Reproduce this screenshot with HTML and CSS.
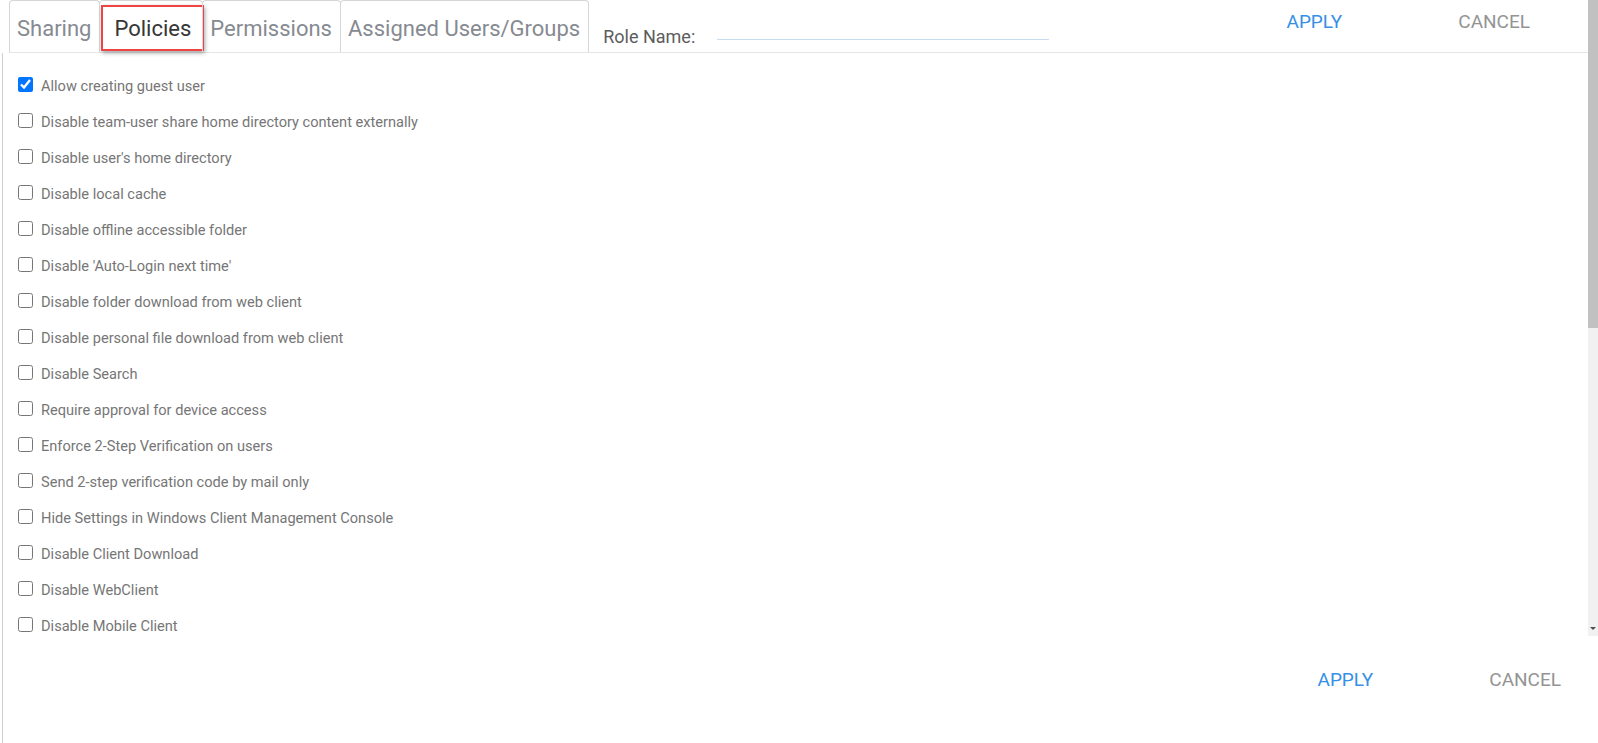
FILE: index.html
```html
<!DOCTYPE html>
<html lang="en">
<head>
    <meta charset="UTF-8">
    <title>Role Policies</title>
    <link rel="stylesheet" href="styles.css">
</head>
<body>
    <div class="viewport">
        <div class="scroll">
            <div class="header">
                <div class="tabs">
                    <div class="tab">Sharing</div>
                    <div class="tab active">Policies</div>
                    <div class="tab">Permissions</div>
                    <div class="tab">Assigned Users/Groups</div>
                </div>
                <div class="role">
                    <label class="role-label" for="roleName">Role Name:</label>
                    <input class="role-input" id="roleName" type="text">
                </div>
                <div class="actions top">
                    <button class="btn apply">APPLY</button>
                    <button class="btn cancel">CANCEL</button>
                </div>
            </div>
            <div class="list">
                <label class="row"><input type="checkbox" checked><span>Allow creating guest user</span></label>
                <label class="row"><input type="checkbox"><span>Disable team-user share home directory content externally</span></label>
                <label class="row"><input type="checkbox"><span>Disable user's home directory</span></label>
                <label class="row"><input type="checkbox"><span>Disable local cache</span></label>
                <label class="row"><input type="checkbox"><span>Disable offline accessible folder</span></label>
                <label class="row"><input type="checkbox"><span>Disable 'Auto-Login next time'</span></label>
                <label class="row"><input type="checkbox"><span>Disable folder download from web client</span></label>
                <label class="row"><input type="checkbox"><span>Disable personal file download from web client</span></label>
                <label class="row"><input type="checkbox"><span>Disable Search</span></label>
                <label class="row"><input type="checkbox"><span>Require approval for device access</span></label>
                <label class="row"><input type="checkbox"><span>Enforce 2-Step Verification on users</span></label>
                <label class="row"><input type="checkbox"><span>Send 2-step verification code by mail only</span></label>
                <label class="row"><input type="checkbox"><span>Hide Settings in Windows Client Management Console</span></label>
                <label class="row"><input type="checkbox"><span>Disable Client Download</span></label>
                <label class="row"><input type="checkbox"><span>Disable WebClient</span></label>
                <label class="row"><input type="checkbox"><span>Disable Mobile Client</span></label>
            </div>
        </div>
        <div class="scrollbar">
            <div class="thumb"></div>
            <div class="track"></div>
            <div class="arrow"></div>
        </div>
    </div>
    <div class="footer">
        <div class="actions">
            <button class="btn apply">APPLY</button>
            <button class="btn cancel">CANCEL</button>
        </div>
    </div>
</body>
</html>
```

FILE: styles.css
```css
body {
    margin: 0;
    font-family: Roboto, "Liberation Sans", sans-serif;
    background: #fff;
    overflow: hidden;
}
.viewport {
    display: flex;
    height: 636px;
}
.scroll {
    flex: 1;
    display: flex;
    flex-direction: column;
    overflow: hidden;
}
.header {
    display: flex;
    height: 52px;
    margin-left: 9px;
    border-bottom: 1px solid #e6e6e6;
    flex-shrink: 0;
}
.tabs {
    display: flex;
}
.tab {
    position: relative;
    display: flex;
    align-items: center;
    box-sizing: border-box;
    height: 52px;
    padding: 4px 8px 0 7px;
    margin-right: -1px;
    border: 1px solid #d6d6d6;
    border-bottom: none;
    border-radius: 4px 4px 0 0;
    font-size: 22px;
    color: #868a91;
}
.tab.active {
    padding: 4px 11px 0 14px;
    color: #363636;
}
.tab.active::after {
    content: "";
    position: absolute;
    top: 4px;
    left: 1px;
    right: -2px;
    bottom: 1px;
    border: 2px solid #ee4444;
    box-shadow: 1px 2px 4px rgba(0, 0, 0, 0.35);
}
.role {
    display: flex;
    margin-left: 15px;
}
.role-label {
    margin-top: 27px;
    font-size: 18px;
    line-height: 20px;
    color: #5c5c5c;
}
.role-input {
    box-sizing: border-box;
    width: 332px;
    height: 40px;
    margin-left: 22px;
    padding: 0;
    border: none;
    border-bottom: 1px solid #c8dbef;
    outline: none;
    background: transparent;
}
.actions {
    display: flex;
    gap: 116px;
    margin-left: auto;
}
.actions.top {
    padding-right: 58px;
}
.btn {
    padding: 0;
    border: none;
    background: none;
    font-family: inherit;
    font-size: 19px;
    line-height: 20px;
    cursor: pointer;
}
.top .btn {
    margin-top: 12px;
    align-self: flex-start;
}
.apply {
    color: #3590e6;
}
.cancel {
    color: #949494;
}
.list {
    flex: 1;
    margin-left: 2px;
    padding-top: 14px;
    border-left: 1px solid #cfcfcf;
}
.row {
    display: flex;
    align-items: center;
    height: 36px;
    padding-left: 15px;
    font-size: 14.6px;
    color: #767676;
}
.row input {
    width: 15px;
    height: 15px;
    margin: 0 8px 2px 0;
}
.row span {
    padding-top: 2px;
}
.scrollbar {
    display: flex;
    flex-direction: column;
    width: 10px;
    background: #f1f1f1;
}
.thumb {
    height: 328px;
    background: #c1c1c1;
}
.track {
    flex: 1;
}
.arrow {
    width: 0;
    height: 0;
    margin: 0 auto 6px;
    border-left: 3px solid transparent;
    border-right: 3px solid transparent;
    border-top: 3px solid #505050;
}
.footer {
    height: 107px;
    margin-left: 2px;
    border-left: 1px solid #cfcfcf;
    display: flex;
}
.footer .actions {
    padding-right: 37px;
    margin-top: 34px;
    align-self: flex-start;
}
```
